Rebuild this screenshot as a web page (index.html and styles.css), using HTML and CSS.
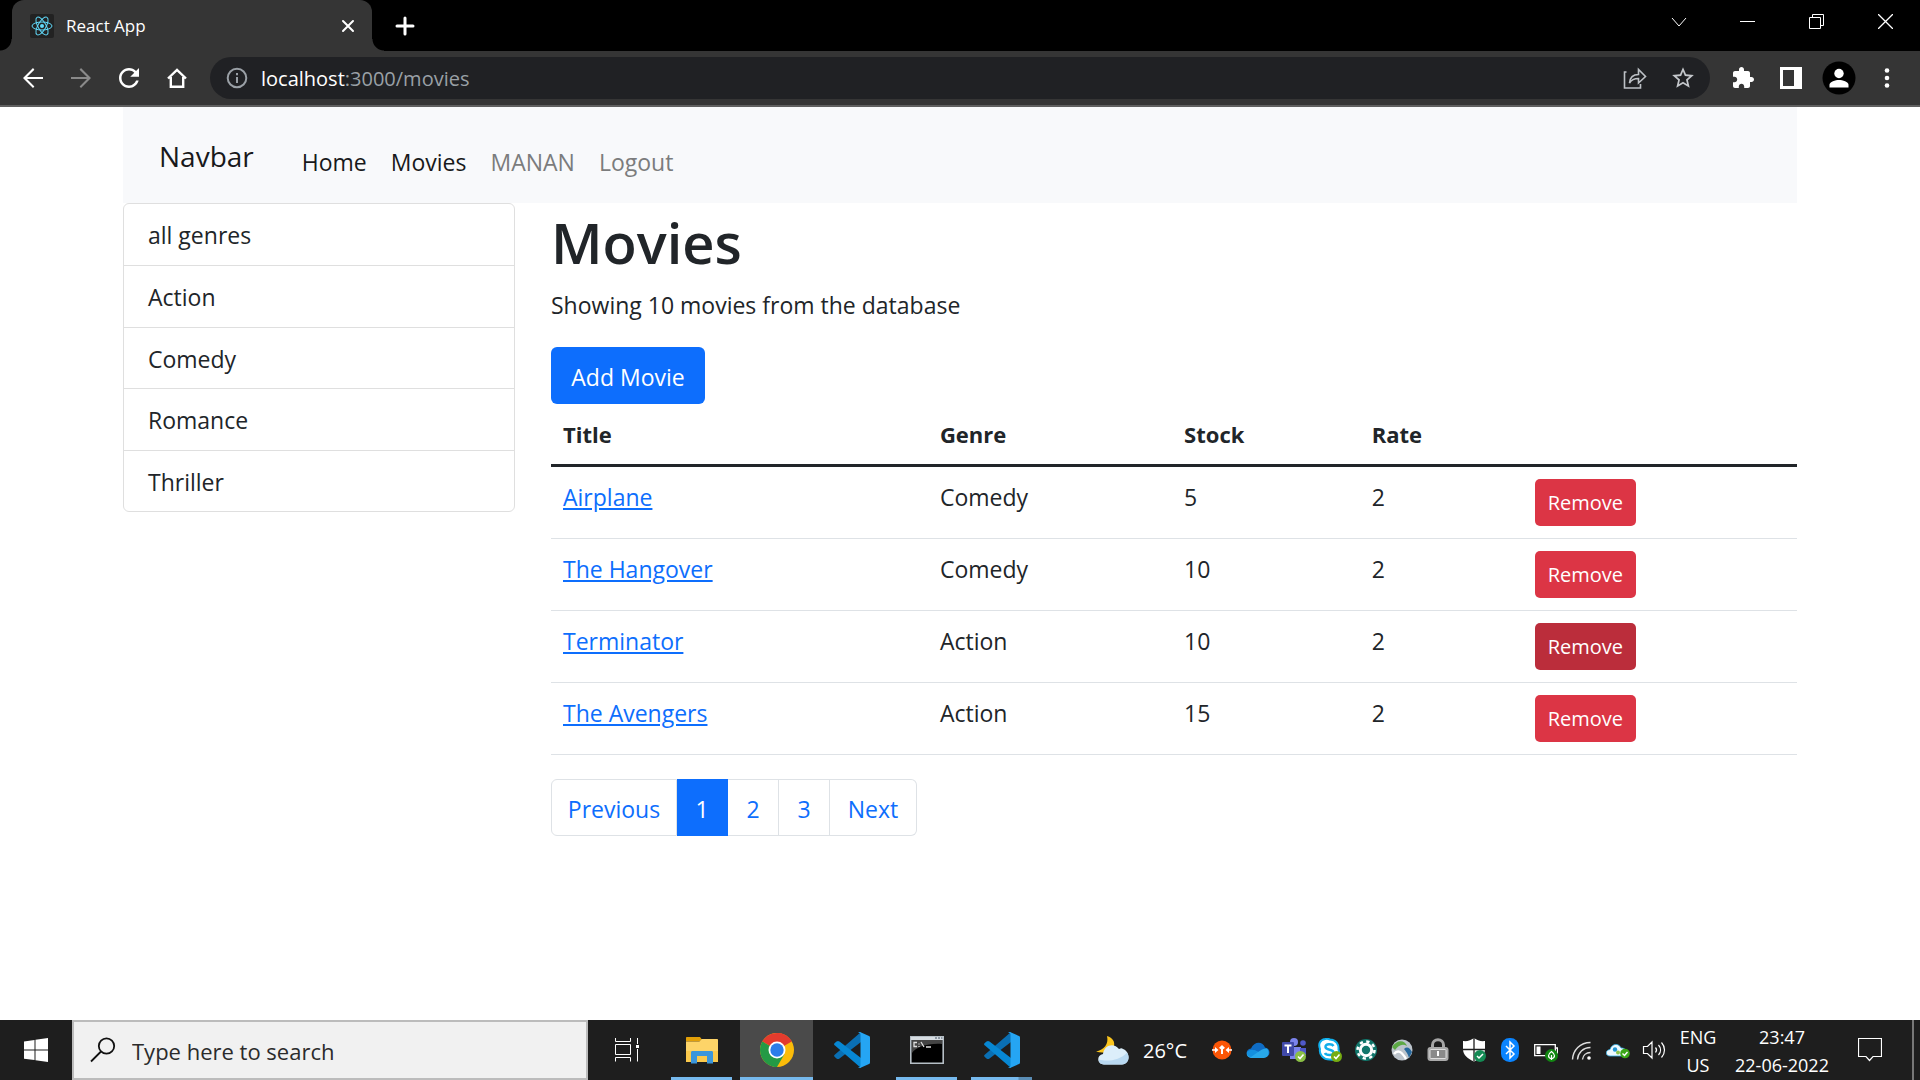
FILE: index.html
```html
<!DOCTYPE html>
<html lang="en">
<head>
<meta charset="utf-8">
<title>React App</title>
<meta name="viewport" content="width=device-width, initial-scale=1">
<link rel="stylesheet" href="styles.css">
</head>
<body>
<svg class="defs" width="0" height="0" aria-hidden="true">
  <symbol id="vscode" viewBox="0 0 36 36">
    <path d="M1 22.500 27 0v10L5.500 26.500c-1 .8-2 .8-3 0L.8 25c-1-.8-1-1.700.2-2.500z" fill="#0a6fb3"/>
    <path d="M1 13.500 27 36V26L5.500 9.500c-1-.8-2-.8-3 0L.8 11c-1 .8-1 1.700.2 2.500z" fill="#0787d3"/>
    <path d="M26 0l9 4c.7.300 1 .8 1 1.500v25c0 .7-.3 1.200-1 1.500l-9 4c-1 0-1.500-.4-2-1 1.500.8 2.500 0 2.500-1.500v-31C26.500 1 25.500.2 24 1c.5-.6 1-1 2-1z" fill="#25a5f3"/>
  </symbol>
</svg>

<header class="browser">
  <div class="tabstrip">
    <div class="tab">
      <svg class="favicon" width="24" height="24" viewBox="0 0 24 24" aria-hidden="true">
        <rect width="24" height="24" rx="2" fill="#222"/>
        <g fill="none" stroke="#61dafb">
          <ellipse cx="12" cy="12" rx="10" ry="4"/>
          <ellipse cx="12" cy="12" rx="10" ry="4" transform="rotate(60 12 12)"/>
          <ellipse cx="12" cy="12" rx="10" ry="4" transform="rotate(120 12 12)"/>
        </g>
        <circle cx="12" cy="12" r="2" fill="#61dafb"/>
      </svg>
      <span class="tab-title">React App</span>
      <button class="icon-btn tab-close" aria-label="Close tab">
        <svg width="14" height="14" viewBox="0 0 14 14"><path d="M2 2l10 10M12 2L2 12" stroke="#fff" stroke-width="2" stroke-linecap="round"/></svg>
      </button>
    </div>
    <button class="icon-btn new-tab" aria-label="New tab">
      <svg width="20" height="20" viewBox="0 0 20 20"><path d="M10 2v16M2 10h16" stroke="#fff" stroke-width="3" stroke-linecap="round"/></svg>
    </button>
    <div class="window-controls">
      <button class="icon-btn" aria-label="Search tabs"><svg width="16" height="16" viewBox="0 0 16 16"><path d="M1 4l7 8 7-8" fill="none" stroke="#fff"/></svg></button>
      <button class="icon-btn" aria-label="Minimize"><svg width="15" height="15" viewBox="0 0 15 15"><path d="M0 7.500h15" stroke="#fff"/></svg></button>
      <button class="icon-btn" aria-label="Restore"><svg width="15" height="15" viewBox="0 0 15 15"><path d="M.5 3.500h11v11H.5zM3.500 3.500v-3h11v11h-3" fill="none" stroke="#fff"/></svg></button>
      <button class="icon-btn" aria-label="Close"><svg width="15" height="15" viewBox="0 0 15 15"><path d="M0 0l15 15M15 0L0 15" stroke="#fff" stroke-width="1.300"/></svg></button>
    </div>
  </div>
  <div class="toolbar">
    <button class="icon-btn" aria-label="Back"><svg width="30" height="30" viewBox="0 0 24 24"><path fill="#fff" d="M20 11.200H7.200l5.900-5.900L12 4l-8 8 8 8 1.100-1.300-5.900-5.900H20z"/></svg></button>
    <button class="icon-btn" aria-label="Forward"><svg width="30" height="30" viewBox="0 0 24 24"><path fill="#8a8a8a" d="M4 11.200h12.800l-5.900-5.900L12 4l8 8-8 8-1.100-1.300 5.900-5.900H4z"/></svg></button>
    <button class="icon-btn" aria-label="Reload"><svg width="30" height="30" viewBox="0 0 24 24"><path fill="#fff" d="M17.650 6.350C16.200 4.900 14.210 4 12 4c-4.420 0-7.990 3.580-7.990 8s3.570 8 7.990 8c3.730 0 6.840-2.550 7.730-6h-2.080c-.82 2.330-3.040 4-5.650 4-3.310 0-6-2.690-6-6s2.690-6 6-6c1.660 0 3.140.69 4.220 1.780L13 11h7V4l-2.350 2.350z"/></svg></button>
    <button class="icon-btn" aria-label="Home"><svg width="22" height="22" viewBox="0 0 22 22"><path d="M2 11.500L11 3l9 8.500M4.800 10v9.800h12.400V10" fill="none" stroke="#fff" stroke-width="2.400"/></svg></button>
    <div class="omnibox">
      <svg width="22" height="22" viewBox="0 0 22 22" aria-hidden="true"><circle cx="11" cy="11" r="9.300" fill="none" stroke="#9aa0a6" stroke-width="2"/><path d="M11 10v6M11 6v2.200" stroke="#9aa0a6" stroke-width="2"/></svg>
      <div class="address" role="textbox" aria-label="Address" contenteditable="true" spellcheck="false"><span class="host">localhost</span>:3000/movies</div>
      <button class="icon-btn" aria-label="Share"><svg width="24" height="24" viewBox="0 0 24 24"><path d="M3.500 6H1.500v16h16v-4M6.500 17c.5-6 4-8.500 9-8.500V3.500l7 7-7 6.500v-4.500c-4 0-7 1-9 4.500z" fill="none" stroke="#bdc1c6" stroke-width="1.600"/></svg></button>
      <button class="icon-btn" aria-label="Bookmark"><svg width="26" height="26" viewBox="0 0 24 24"><path fill="#c4c7cb" d="M22 9.240l-7.190-.62L12 2 9.190 8.630 2 9.240l5.460 4.730L5.820 21 12 17.270 18.180 21l-1.630-7.030L22 9.240zM12 15.400l-3.760 2.270 1-4.280-3.320-2.880 4.380-.38L12 6.100l1.710 4.040 4.380.38-3.320 2.880 1 4.280L12 15.400z"/></svg></button>
    </div>
    <button class="icon-btn" aria-label="Extensions"><svg width="24" height="24" viewBox="0 0 24 24"><path fill="#fff" d="M20.500 11H19V7c0-1.100-.9-2-2-2h-4V3.500C13 2.120 11.880 1 10.500 1S8 2.120 8 3.500V5H4c-1.100 0-1.990.9-1.990 2v3.800H3.500c1.490 0 2.700 1.210 2.700 2.700s-1.210 2.700-2.700 2.700H2V20c0 1.100.9 2 2 2h3.800v-1.500c0-1.490 1.210-2.700 2.700-2.700 1.490 0 2.700 1.210 2.700 2.700V22H17c1.100 0 2-.9 2-2v-4h1.500c1.380 0 2.500-1.120 2.500-2.500S21.880 11 20.500 11z"/></svg></button>
    <button class="icon-btn" aria-label="Side panel"><svg width="22" height="22" viewBox="0 0 22 22"><path fill="#fff" fill-rule="evenodd" d="M0 0h22v22H0zM3 3v16h11V3z"/></svg></button>
    <button class="icon-btn" aria-label="Profile"><svg width="34" height="34" viewBox="0 0 34 34"><circle cx="17" cy="17" r="16.500" fill="#000"/><circle cx="17" cy="12.500" r="4.700" fill="#fff"/><path d="M7.500 26.500v-2.800c0-3 6-4.700 9.500-4.700s9.500 1.700 9.500 4.700v2.800z" fill="#fff"/></svg></button>
    <button class="icon-btn" aria-label="Menu"><svg width="6" height="22" viewBox="0 0 6 22"><g fill="#fff"><circle cx="3" cy="3.500" r="2.300"/><circle cx="3" cy="11" r="2.300"/><circle cx="3" cy="18.500" r="2.300"/></g></svg></button>
  </div>
</header>

<div class="page">
  <nav class="navbar">
    <a class="brand" href="#">Navbar</a>
    <ul class="nav-links">
      <li><a class="active" href="#">Home</a></li>
      <li><a class="active" href="#">Movies</a></li>
      <li><a href="#">MANAN</a></li>
      <li><a href="#">Logout</a></li>
    </ul>
  </nav>
  <div class="columns">
    <aside class="sidebar">
      <ul class="genres">
        <li>all genres</li>
        <li>Action</li>
        <li>Comedy</li>
        <li>Romance</li>
        <li>Thriller</li>
      </ul>
    </aside>
    <main class="content">
      <h1>Movies</h1>
      <p>Showing 10 movies from the database</p>
      <button class="btn btn-primary">Add Movie</button>
      <table class="movies">
        <colgroup><col class="col-title"><col class="col-genre"><col class="col-stock"><col class="col-rate"><col></colgroup>
        <thead>
          <tr><th>Title</th><th>Genre</th><th>Stock</th><th>Rate</th><th></th></tr>
        </thead>
        <tbody>
          <tr><td><a href="#">Airplane</a></td><td>Comedy</td><td>5</td><td>2</td><td><button class="btn btn-danger">Remove</button></td></tr>
          <tr><td><a href="#">The Hangover</a></td><td>Comedy</td><td>10</td><td>2</td><td><button class="btn btn-danger">Remove</button></td></tr>
          <tr><td><a href="#">Terminator</a></td><td>Action</td><td>10</td><td>2</td><td><button class="btn btn-danger pressed">Remove</button></td></tr>
          <tr><td><a href="#">The Avengers</a></td><td>Action</td><td>15</td><td>2</td><td><button class="btn btn-danger">Remove</button></td></tr>
        </tbody>
      </table>
      <ul class="pagination">
        <li class="wide"><a href="#">Previous</a></li>
        <li class="current"><a href="#">1</a></li>
        <li><a href="#">2</a></li>
        <li><a href="#">3</a></li>
        <li class="next"><a href="#">Next</a></li>
      </ul>
    </main>
  </div>
</div>

<footer class="taskbar">
  <button class="icon-btn start" aria-label="Start"><svg width="24" height="24" viewBox="0 0 24 24"><path fill="#fff" d="M0 3.400l10.500-1.500v9.600H0zM11.500 1.700L24 0v11.500H11.500zM0 12.500h10.500v9.600L0 20.700zM11.500 12.500H24V24l-12.500-1.700z"/></svg></button>
  <label class="search">
    <svg width="26" height="26" viewBox="0 0 26 26" aria-hidden="true"><circle cx="16.500" cy="9" r="7.700" fill="none" stroke="#111" stroke-width="1.800"/><path d="M11 14.500L1 24.500" stroke="#111" stroke-width="1.800"/></svg>
    <input type="text" aria-label="Search" placeholder="Type here to search">
  </label>
  <div class="tasks">
    <button class="task" aria-label="Task view"><svg width="24" height="24" viewBox="0 0 24 24"><path d="M.5 0v3.500h15V0M.5 6.500h15v10H.5zM.5 23.500v-4h15v4M22.500 0v6M22.500 11v12.500" fill="none" stroke="#fff"/><path d="M21 7h3v3h-3z" fill="#fff"/></svg></button>
    <button class="task open" aria-label="File Explorer"><svg width="32" height="28" viewBox="0 0 32 28"><path d="M0 2c0-.6.400-1 1-1h13l1.500 2-1.500 2.500H0z" fill="#e2a008"/><path d="M0 5.500h13.500l2-2.500H31c.6 0 1 .4 1 1v22H0z" fill="#fdd468"/><path d="M0 15h32v11H0z" fill="#fbc94c"/><path d="M5 27.500V16.500c0-1 .7-1.500 1.500-1.500h19c1 0 1.500.6 1.500 1.500v11h-6V20H11v7.500z" fill="#3b96dc"/></svg></button>
    <button class="task open focused" aria-label="Chrome"><svg width="34" height="34" viewBox="0 0 34 34"><circle cx="17" cy="17" r="17" fill="#fbbc09"/><path d="M17 17L2.300 8.500A17 17 0 0 1 31.700 8.500z" fill="#e33b2e"/><path d="M17 0a17 17 0 0 1 14.700 8.500H17z" fill="#e33b2e"/><path d="M2.300 8.500A17 17 0 0 0 17 34l7.400-12.700H17z" fill="#249a45"/><path d="M2.300 8.500L9.600 21.300 17 17z" fill="#249a45"/><circle cx="17" cy="17" r="8.500" fill="#fff"/><circle cx="17" cy="17" r="6.700" fill="#2b7de9"/></svg></button>
    <button class="task" aria-label="Visual Studio Code"><svg width="36" height="36"><use href="#vscode"/></svg></button>
    <button class="task open" aria-label="Command Prompt"><svg width="34" height="28" viewBox="0 0 34 28"><path d="M.8.800h32.400v26.400H.8z" fill="#000" stroke="#b6bfc6" stroke-width="1.600"/><path d="M1 1h32v3H1z" fill="#d7dde2"/><path d="M25 2h2M28 2h2M31 2h1.500" stroke="#456"/><path d="M2 4h30v4C18 7 6 11 2 17z" fill="#444"/><path d="M7 6.500H4v4h3M9 7.500v1M9 10v1M11 6l3 5M16 11h5" fill="none" stroke="#ddd" stroke-width="1.300"/></svg></button>
    <button class="task open grouped" aria-label="Visual Studio Code windows"><svg width="36" height="36"><use href="#vscode"/></svg></button>
  </div>
  <div class="weather">
    <svg width="34" height="30" viewBox="0 0 34 30" aria-hidden="true"><path d="M11 0c6 2 8 6 7 10-2 6-11 8-18 5.500C8 14 13 8 11 0z" fill="#fbc51d"/><path d="M8 28.500c-7 0-8-9-1-10.500C8 9 18 6 23 13c2-1 3-1 4 0 7 2 8 15-1 15.500z" fill="#dceefa"/><path d="M8 28.500c-4 0-5.500-3-5-5 8 2.500 21 1 28-7 4 6 0 12-5 12z" fill="#b9d9f1"/></svg>
    <span>26°C</span>
  </div>
  <div class="tray">
    <svg viewBox="0 0 24 24"><circle cx="12" cy="12" r="9.500" fill="#fb5607"/><path d="M12 16V9M9.800 10.500L12 8.300l2.200 2.200" stroke="#fff" stroke-width="2" fill="none"/><path d="M2 11.200h3V9l3.500 3L5 15v-2.200H2zM22 11.200h-3V9l-3.500 3 3.500 3v-2.200h3z" fill="#fff"/></svg>
    <svg viewBox="0 0 24 24"><path d="M4 19c-5-2-4-8 1-8.500C8 3 17 3 19 9.500c6 1 6 9 0 9.800z" fill="#0f6cc4"/><path d="M1 14.500c3-3 7-3 11-.5 3-2 6-4 9-3.500 3 3 2 9-3 9.500H5c-3-.6-5-3-4-5.500z" fill="#28a8ea"/><path d="M1 14.500c2-3.500 7-3.500 11-.5l-7 5c-3-.4-4.500-2.500-4-4.500z" fill="#1490df"/></svg>
    <svg viewBox="0 0 24 24"><circle cx="12" cy="4" r="4" fill="#7b83eb"/><circle cx="21" cy="5" r="2.800" fill="#5059c9"/><path d="M8 9h11v12H8z" fill="#7b83eb"/><path d="M18 10h6v7h-6z" fill="#5059c9"/><rect y="4" width="12" height="14" rx="1" fill="#4049a8"/><path d="M2.500 7.500h7M6 7.500V15" stroke="#fff" stroke-width="2"/><circle cx="18.500" cy="18.500" r="5.500" fill="#8abf45"/><path d="M16 18.500l2 2 3.500-4" stroke="#fff" stroke-width="1.600" fill="none"/></svg>
    <svg viewBox="0 0 24 24"><path d="M7 1c2-.5 4 0 5 .5 6 0 9 5 8.500 10 2 6-2 11-8 10C5 22 1 16 2 11 0 6 2 2 7 1z" fill="#fff" stroke="#0fb0ee" stroke-width="2"/><path d="M15.500 8C14 5.500 7 5.500 7.500 9s8 2 8 5.500c0 3.500-7.500 3-8.500.5" fill="none" stroke="#13aeeb" stroke-width="2.500"/><circle cx="18.500" cy="18.500" r="5.500" fill="#76ac12"/><path d="M16 18.500l2 2 3.500-4" stroke="#fff" stroke-width="1.600" fill="none"/></svg>
    <svg viewBox="0 0 24 24"><circle cx="12" cy="12" r="11" fill="#11766b"/><circle cx="12" cy="12" r="5.700" fill="none" stroke="#fff" stroke-width="3"/><circle cx="12" cy="12" r="8.500" fill="none" stroke="#fff" stroke-width="2.500" stroke-dasharray="3.300 3.370"/></svg>
    <svg viewBox="0 0 24 24"><circle cx="12" cy="12" r="10.500" fill="#bcc4cc"/><path d="M2 9C7 1 15 2 17 8c-5-3-9 0-12 4z" fill="#5ca844"/><path d="M14 11c3-3 6-1 8 3l-3 6c-1-4-2-5-5-9z" fill="#27689d"/><path d="M4 16c4-5 8-2 12 5" stroke="#fff" stroke-width="2.500" fill="none"/></svg>
    <svg viewBox="0 0 24 24"><path d="M6.500 11V7c0-7 11-7 11 0v4" fill="none" stroke="#a6a6a6" stroke-width="3"/><rect x="1.500" y="9" width="21" height="14" rx="3" fill="#aaa"/><rect x="4" y="11.500" width="16" height="9" rx="1" fill="#8a8a8a" stroke="#ddd"/><path d="M12 13v5" stroke="#fff" stroke-width="2"/></svg>
    <svg viewBox="0 0 24 24"><path d="M12 0c3 2.500 7 3.500 11 3v8c0 6-5 10-11 12.500C6 21 1 17 1 11V3c4 .5 8-.5 11-3z" fill="#fff"/><path d="M12 0v23M1 11.500h22" stroke="#1e1e1e" stroke-width="1.300"/><circle cx="18" cy="18" r="6" fill="#148a54"/><path d="M15 18l2 2 4-4" stroke="#fff" stroke-width="1.500" fill="none"/></svg>
    <svg viewBox="0 0 24 24"><rect x="3" width="18" height="24" rx="8.500" fill="#0a84ff"/><path d="M8 8l8 8-4 4V4l4 4-8 8" fill="none" stroke="#fff" stroke-width="1.500"/></svg>
    <svg viewBox="0 0 24 24"><path d="M.7 6.700h20.600v11H.7zM22 10h1.500v5H22" fill="none" stroke="#fff" stroke-width="1.300"/><path d="M2.500 8.500h4v7.500h-4z" fill="#fff"/><circle cx="17.500" cy="17.500" r="6.500" fill="#128712"/><path d="M17.500 22v-5M17.500 13.500c4 3 4 6 0 7.500-4-1.500-4-4.500 0-7.500z" fill="none" stroke="#fff" stroke-width="1.200"/></svg>
    <svg viewBox="0 0 24 24"><g fill="none" stroke="#ddd" stroke-width="1.400"><path d="M2.500 21.500C3 12 10 4.500 20.500 4.500M7.500 21.500C8 15 13 9.500 20.500 9.500M12.500 21.500c.5-4 3.500-7 8-7"/></g><circle cx="19" cy="20" r="1.800" fill="#fff"/></svg>
    <svg viewBox="0 0 24 24"><path d="M4 18c-5 0-5-6 0-6.500C6 5 13 5 15 10c4 0 6 2 6 8z" fill="#eef9ff" stroke="#31ace0" stroke-width=".8"/><circle cx="9" cy="11.500" r="2.200" fill="#2196d5"/><circle cx="12" cy="14.500" r="2" fill="#8bc34a"/><circle cx="19" cy="15.500" r="4.800" fill="#3ba718"/><path d="M16.500 15.500l2 2 3-3.500" stroke="#fff" stroke-width="1.400" fill="none"/></svg>
    <svg viewBox="0 0 24 24"><path d="M1.500 8.500h4L10 4v16l-4.500-4.500h-4zM13.500 9.500c1.300 1.500 1.300 3.500 0 5M16.500 7c2.700 3 2.700 7 0 10M19.500 4.500c4 4.500 4 10.500 0 15" fill="none" stroke="#fff" stroke-width="1.200"/></svg>
  </div>
  <div class="status lang"><span>ENG</span><span>US</span></div>
  <div class="status clock"><span>23:47</span><span>22-06-2022</span></div>
  <button class="icon-btn notifications" aria-label="Notifications"><svg width="24" height="24" viewBox="0 0 24 24"><path d="M.5.500h23v18H15L11.500 22.500 8 18.500H.5z" fill="none" stroke="#fff" stroke-width="1.200"/></svg></button>
  <div class="show-desktop"></div>
</footer>
</body>
</html>
```
FILE: styles.css
```css
* { box-sizing: border-box; }

body {
  margin: 0;
  min-height: 100vh;
  display: flex;
  flex-direction: column;
  background: #fff;
  color: #212529;
  font: 23px/36px "Open Sans", "Noto Sans", sans-serif;
}

ul { list-style: none; margin: 0; padding: 0; }
button, input { font: inherit; }
svg { display: block; flex: none; }
.defs { position: absolute; }

.icon-btn {
  display: flex;
  align-items: center;
  justify-content: center;
  flex: none;
  padding: 0;
  border: 0;
  background: none;
}

/* Browser window */
.browser { border-bottom: 2px solid #5f5f5f; background: #353535; }

.tabstrip {
  display: flex;
  height: 51px;
  padding-left: 12px;
  background: #000;
}

.tab {
  position: relative;
  display: flex;
  align-items: center;
  width: 360px;
  padding: 0 12px 0 18px;
  border-radius: 12px 12px 0 0;
  background: #353535;
  color: #fff;
  font-size: 17px;
}

.tab::before,
.tab::after {
  content: "";
  position: absolute;
  bottom: 0;
  width: 12px;
  height: 12px;
}
.tab::before { left: -12px; background: radial-gradient(circle at 0 0, #000 11px, #353535 12px); }
.tab::after { right: -12px; background: radial-gradient(circle at 100% 0, #000 11px, #353535 12px); }

.tab-title { flex: 1; margin-left: 12px; }
.tab-close { width: 24px; height: 24px; }
.new-tab { width: 66px; }

.window-controls { display: flex; margin-left: auto; height: 43px; }
.window-controls .icon-btn { width: 69px; }

.toolbar {
  display: flex;
  align-items: center;
  height: 54px;
  padding: 0 9px;
}
.toolbar .icon-btn { width: 48px; height: 42px; }

.omnibox {
  flex: 1;
  display: flex;
  align-items: center;
  height: 42px;
  margin: 0 9px;
  padding: 0 3px 0 16px;
  border-radius: 21px;
  background: #202124;
}
.address { flex: 1; margin-left: 13px; padding-top: 2px; color: #9aa0a6; font-size: 20px; }
.host { color: #fff; }

/* Page */
.page {
  flex: 1;
  width: 100%;
  max-width: 1674px;
  margin: 0 auto;
}

.navbar {
  display: flex;
  align-items: center;
  height: 96px;
  padding: 2px 36px 0;
  background: #f8f9fb;
}
.brand { margin-right: 48px; color: #18191b; font-size: 28px; text-decoration: none; }
.nav-links { display: flex; gap: 24px; padding-top: 12px; }
.nav-links a { color: #7b7c7d; text-decoration: none; }
.nav-links .active { color: #18191b; }

.columns { display: flex; align-items: flex-start; gap: 36px; }
.sidebar { flex: 0 0 392px; }
.content { flex: 1; padding-bottom: 36px; }

.genres {
  display: grid;
  grid-auto-rows: 1fr;
  min-height: 309px;
  border: 1px solid #dfdfdf;
  border-radius: 6px;
}
.genres li { padding: 13px 24px 11px; }
.genres li + li { border-top: 1px solid #dfdfdf; }

h1 { margin: 0 0 6px; font-size: 56px; font-weight: 600; line-height: 78px; }
p { margin: 0 0 24px; }

.btn {
  display: block;
  border: 0;
  border-radius: 6px;
  color: #fff;
  white-space: nowrap;
}
.btn-primary { width: 154px; padding: 12px 0 9px; background: #0d6efd; }
.btn-danger { width: 101px; padding: 6px 0 5px; border-radius: 5px; background: #dc3545; font-size: 20px; }
.btn-danger.pressed { background: #bb2d3b; }

.movies { width: 100%; border-collapse: separate; border-spacing: 0; table-layout: fixed; }
.movies th { padding: 12px; border-bottom: 3px solid #212529; font-size: 22px; font-weight: 700; text-align: left; }
.movies td { padding: 12px; border-bottom: 1px solid #dee2e6; vertical-align: top; }
.movies a { color: #0d6efd; }
.col-title { width: 30.25%; }
.col-genre { width: 19.6%; }
.col-stock { width: 15.05%; }
.col-rate { width: 13.1%; }

.pagination { display: flex; margin-top: 24px; text-align: center; }
.pagination li { width: 51px; border: 1px solid #dee2e6; border-left: 0; }
.pagination a { display: block; padding: 11px 0 8px; color: #0d6efd; text-decoration: none; }
.pagination .wide { width: 126px; border-left: 1px solid #dee2e6; border-radius: 6px 0 0 6px; }
.pagination .next { width: 87px; border-radius: 0 6px 6px 0; }
.pagination .current { border-color: #0d6efd; background: #0d6efd; }
.pagination .current a { color: #fff; }

/* Taskbar */
.taskbar { display: flex; height: 60px; background: #1e1e1e; color: #fff; }
.start { width: 72px; }

.search {
  flex: 0 1 516px;
  display: flex;
  align-items: center;
  padding-left: 16px;
  border: 2px solid #bcbcbc;
  background: #f1f1f1;
}
.search input {
  flex: 1;
  min-width: 0;
  margin-left: 16px;
  padding: 2px 0 0;
  border: 0;
  background: none;
  font-size: 22px;
  outline: 0;
}
.search input::placeholder { color: #2b2b2b; opacity: 1; }

.tasks { display: flex; padding-left: 1px; }
.task {
  position: relative;
  display: flex;
  align-items: center;
  justify-content: center;
  width: 73px;
  margin: 0 1px;
  padding: 0;
  border: 0;
  background: none;
}
.task.open::after {
  content: "";
  position: absolute;
  left: 6px;
  right: 6px;
  bottom: 0;
  height: 3px;
  background: #76b9ed;
}
.task.focused { background: #4a4a4a; }
.task.focused::after { left: 0; right: 0; }
.task.grouped::after { background: linear-gradient(90deg, #76b9ed 47px, #5a8db5 48px); }

.weather { display: flex; align-items: center; gap: 13px; width: 108px; margin-left: auto; padding-top: 2px; font-size: 20px; }
.tray { display: flex; align-items: center; }
.tray svg { width: 24px; height: 24px; margin: 0 6px; }

.status {
  display: flex;
  flex-direction: column;
  justify-content: center;
  align-items: center;
  padding-top: 1px;
  font-size: 18px;
  line-height: 28px;
}
.lang { width: 52px; }
.clock { width: 116px; }
.notifications { width: 60px; }
.show-desktop { width: 8px; margin-left: 12px; border-left: 2px solid #777; }
```
